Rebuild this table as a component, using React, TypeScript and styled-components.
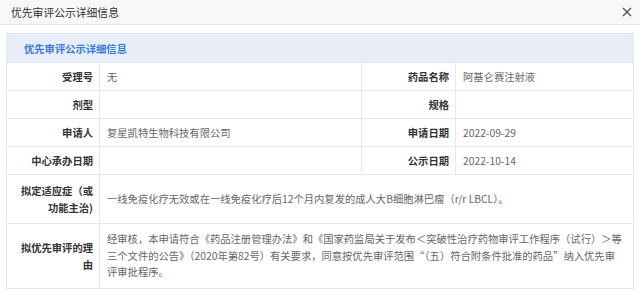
import React from 'react'
import styled, { createGlobalStyle } from 'styled-components'

const GlobalStyle = createGlobalStyle`
    html, body {
        margin: 0;
        padding: 0;
        background: #ffffff;
    }
    body {
        font-family: "Noto Sans CJK SC", "Noto Sans", sans-serif;
        font-size: 10.3px;
        color: #666;
    }
`

const Dialog = styled.div`
    width: 640px;
    height: 297px;
    background: #fff;
    overflow: hidden;
`

const TitleBar = styled.div`
    display: flex;
    align-items: center;
    justify-content: space-between;
    height: 25px;
    padding: 0 6px 0 11px;
    background: #f8f8f8;
    border-bottom: 1px solid #e6e6e6;
    box-sizing: border-box;
`

const TitleText = styled.span`
    font-size: 10.8px;
    color: #333;
`

const CloseButton = styled.button`
    display: flex;
    align-items: center;
    justify-content: center;
    width: 14px;
    height: 14px;
    padding: 0;
    border: none;
    background: none;
    cursor: pointer;
`

const Body = styled.div`
    padding: 8px 6px 0 6px;
`

const Panel = styled.div`
    border: 1px solid #e4e8ee;
    border-top-color: #dde3ec;
`

const PanelHeader = styled.div`
    height: 28px;
    display: flex;
    align-items: center;
    padding-left: 17px;
    background: #e7eefa;
    color: #3b7ad6;
    font-weight: bold;
    font-size: 10.3px;
    border-bottom: 1px solid #e4e8ee;
`

const Table = styled.div`
    display: grid;
    grid-template-columns: 93px 262px 94px 1fr;
`

const Label = styled.div<{ $tall?: boolean; $last?: boolean }>`
    padding: ${p => (p.$tall ? '7px' : '5px')} 6px;
    line-height: 17px;
    text-align: right;
    color: #333;
    font-weight: bold;
    border-right: 1px solid #e8e8e8;
    border-bottom: ${p => (p.$last ? 'none' : '1px solid #e8e8e8')};
    display: flex;
    align-items: center;
    justify-content: flex-end;
`

const Value = styled.div<{ $tall?: boolean; $wide?: boolean; $last?: boolean }>`
    padding: ${p => (p.$tall ? '7px 10px 7px 7px' : '5px 4px 5px 7px')};
    line-height: ${p => (p.$tall ? '16.5px' : '17px')};
    color: #666;
    grid-column: ${p => (p.$wide ? 'span 3' : 'auto')};
    border-right: ${p => (p.$wide ? 'none' : '1px solid #e8e8e8')};
    border-bottom: ${p => (p.$last ? 'none' : '1px solid #e8e8e8')};
    display: flex;
    align-items: center;
`

const LastValue = styled(Value)`
    border-right: none;
`

const CloseIcon: React.FC = () => (
    <svg width="10" height="10" viewBox="0 0 10 10">
        <path d="M1 1 L9 9 M9 1 L1 9" stroke="#555" strokeWidth="1.4" fill="none" />
    </svg>
)

interface Pair {
    label: string
    value: string
}

const rows: Pair[][] = [
    [{ label: '受理号', value: '无' }, { label: '药品名称', value: '阿基仑赛注射液' }],
    [{ label: '剂型', value: '' }, { label: '规格', value: '' }],
    [{ label: '申请人', value: '复星凯特生物科技有限公司' }, { label: '申请日期', value: '2022-09-29' }],
    [{ label: '中心承办日期', value: '' }, { label: '公示日期', value: '2022-10-14' }],
]

const wideRows: Pair[] = [
    {
        label: '拟定适应症（或功能主治)',
        value: '一线免疫化疗无效或在一线免疫化疗后12个月内复发的成人大B细胞淋巴瘤（r/r LBCL）。',
    },
    {
        label: '拟优先审评的理由',
        value: '经审核，本申请符合《药品注册管理办法》和《国家药监局关于发布＜突破性治疗药物审评工作程序（试行）＞等三个文件的公告》（2020年第82号）有关要求，同意按优先审评范围“（五）符合附条件批准的药品”纳入优先审评审批程序。',
    },
]

const App: React.FC = () => {
    return (
        <Dialog>
            <GlobalStyle />
            <TitleBar>
                <TitleText>优先审评公示详细信息</TitleText>
                <CloseButton aria-label="关闭">
                    <CloseIcon />
                </CloseButton>
            </TitleBar>
            <Body>
                <Panel>
                    <PanelHeader>优先审评公示详细信息</PanelHeader>
                    <Table>
                        {rows.map((row, i) => (
                            <React.Fragment key={i}>
                                <Label>{row[0].label}</Label>
                                <Value>{row[0].value}</Value>
                                <Label>{row[1].label}</Label>
                                <LastValue>{row[1].value}</LastValue>
                            </React.Fragment>
                        ))}
                        {wideRows.map((row, i) => (
                            <React.Fragment key={'w' + i}>
                                <Label $tall $last={i === wideRows.length - 1}>{row.label}</Label>
                                <Value $tall $wide $last={i === wideRows.length - 1}>{row.value}</Value>
                            </React.Fragment>
                        ))}
                    </Table>
                </Panel>
            </Body>
        </Dialog>
    )
}

export default App
